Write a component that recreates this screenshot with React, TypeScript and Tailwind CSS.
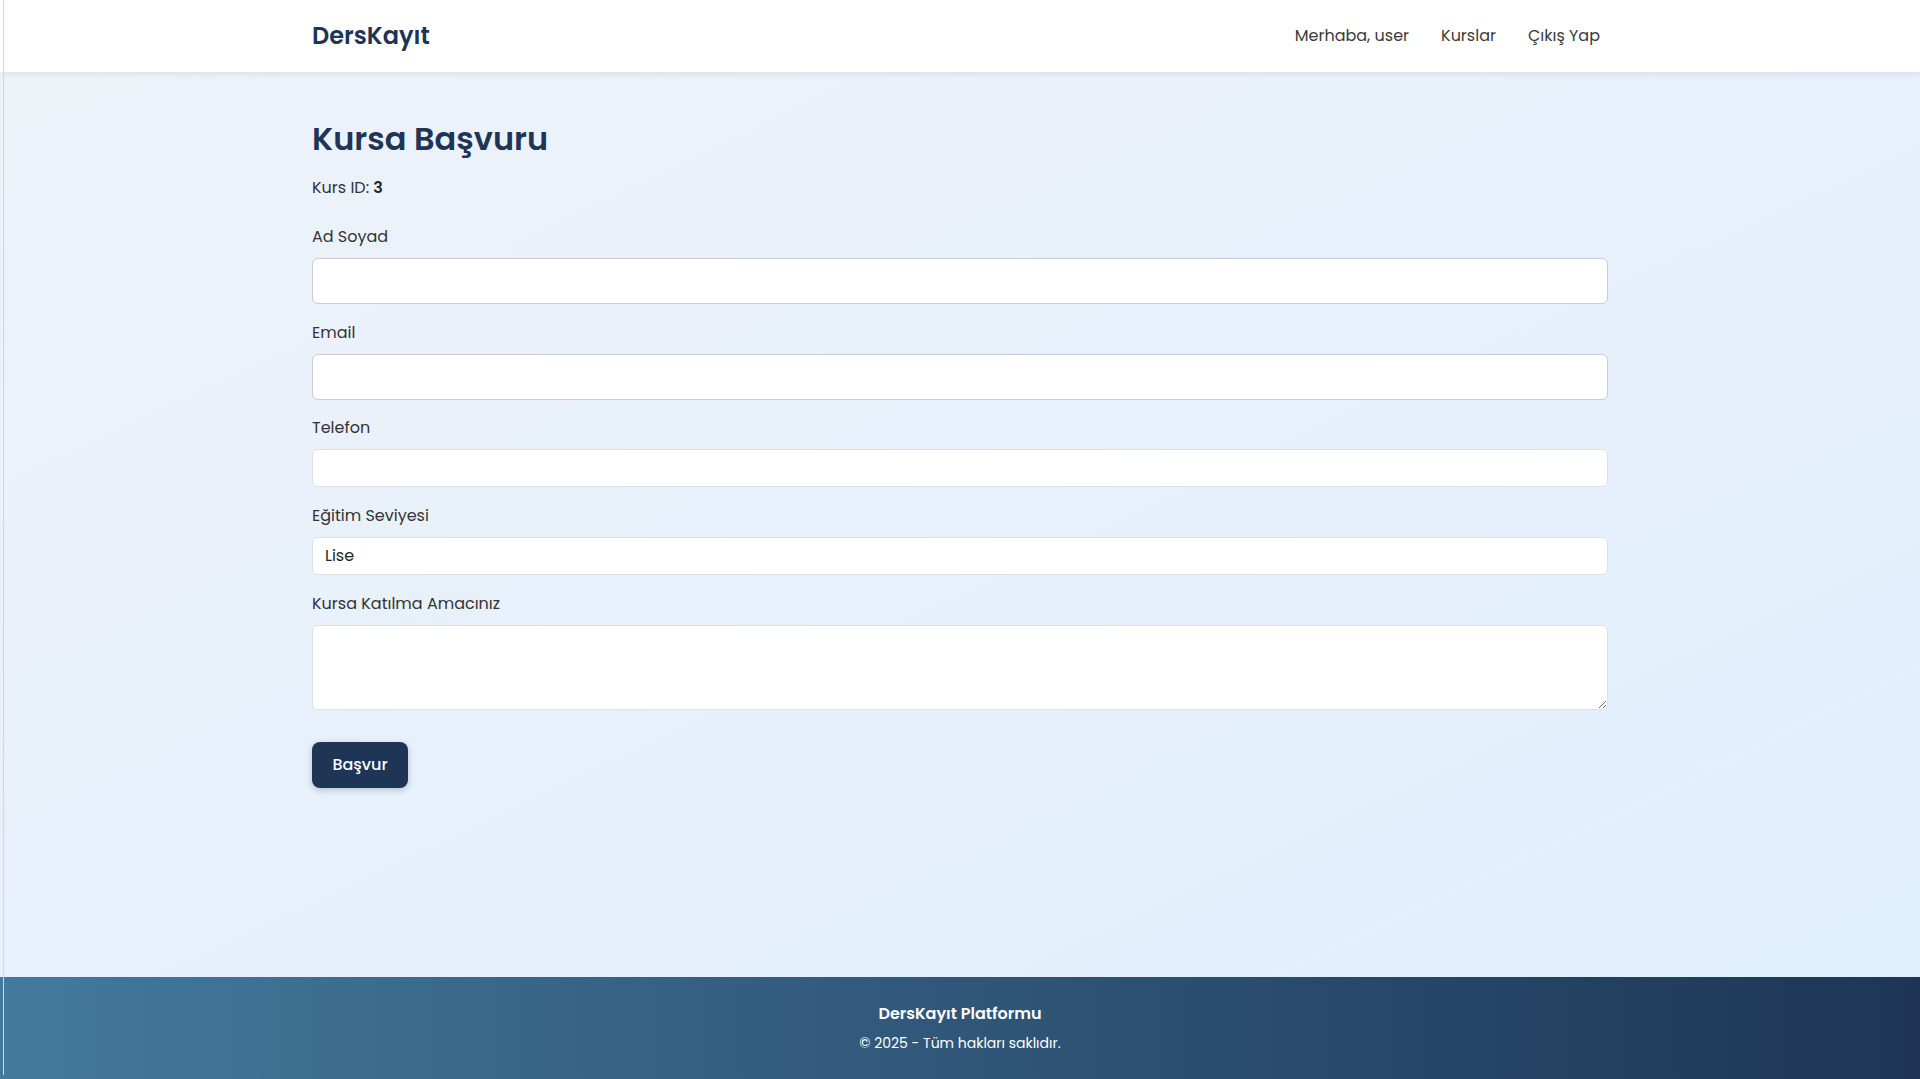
import React from 'react';

const FONT = { fontFamily: "Poppins, 'DejaVu Sans', 'Noto Sans', sans-serif" };

const Field: React.FC<{ label: string; className?: string; children: React.ReactNode }> = ({ label, className = 'mb-[17px]', children }) => (
  <div className={className}>
    <label className="block text-[16px] leading-6 text-[#333] mb-[9px]">{label}</label>
    {children}
  </div>
);

const App: React.FC = () => {
  return (
    <div className="min-h-screen flex flex-col text-[#212529]" style={FONT}>
      <div className="fixed left-[3px] top-0 bottom-[4px] w-px bg-[#d3d7dc] z-20" />

      <header className="h-[72px] bg-white shadow-[0_2px_6px_rgba(0,0,0,0.08)] relative z-10">
        <div className="w-[1296px] mx-auto h-full flex items-center justify-between">
          <span className="text-[24px] font-semibold text-[#1e3556]">DersKayıt</span>
          <nav className="flex items-center gap-[32px] pr-2 text-[16px] text-[#3a3a3a]">
            <span>Merhaba, user</span>
            <a href="#">Kurslar</a>
            <a href="#">Çıkış Yap</a>
          </nav>
        </div>
      </header>

      <main className="flex-1 bg-gradient-to-br from-[#eef2f9] to-[#e0effd]">
        <div className="w-[1296px] mx-auto pt-12">
          <h2 className="text-[32px] leading-[38px] font-semibold text-[#1e3556] mb-[18px]">Kursa Başvuru</h2>
          <p className="text-[16px] leading-6 text-[#333] mb-[25px]">
            Kurs ID: <span className="font-semibold text-[#212529]">3</span>
          </p>

          <form>
            <Field label="Ad Soyad">
              <input type="text" className="block w-full h-[46px] px-3 bg-white border border-[#c9ccd1] rounded-md outline-none" />
            </Field>
            <Field label="Email" className="mb-[16px]">
              <input type="email" className="block w-full h-[46px] px-3 bg-white border border-[#c9ccd1] rounded-md outline-none" />
            </Field>
            <Field label="Telefon">
              <input type="text" className="block w-full h-[38px] px-3 bg-white border border-[#dee2e6] rounded-md outline-none" />
            </Field>
            <Field label="Eğitim Seviyesi">
              <select className="block w-full h-[38px] px-3 bg-white border border-[#dee2e6] rounded-md outline-none appearance-none text-[16px] text-[#212529]">
                <option>Lise</option>
                <option>Ön Lisans</option>
                <option>Lisans</option>
                <option>Yüksek Lisans</option>
              </select>
            </Field>
            <div className="mb-[32px]">
              <label className="block text-[16px] leading-6 text-[#333] mb-[9px]">Kursa Katılma Amacınız</label>
              <textarea className="block w-full h-[85px] px-3 py-2 bg-white border border-[#dee2e6] rounded-md outline-none" />
            </div>
            <button
              type="button"
              className="w-[96px] h-[46px] rounded-lg bg-[#1e3556] text-white text-[16px] font-medium shadow-[0_2px_6px_rgba(30,53,86,0.25)]"
            >
              Başvur
            </button>
          </form>
        </div>
      </main>

      <footer className="h-[102px] bg-gradient-to-r from-[#437a9c] to-[#1e3556] text-white text-center pt-[25px]">
        <div className="text-[16px] leading-6 font-semibold">DersKayıt Platformu</div>
        <div className="text-[14px] leading-[21px] mt-[7px]">© 2025 - Tüm hakları saklıdır.</div>
      </footer>
    </div>
  );
};

export default App;
